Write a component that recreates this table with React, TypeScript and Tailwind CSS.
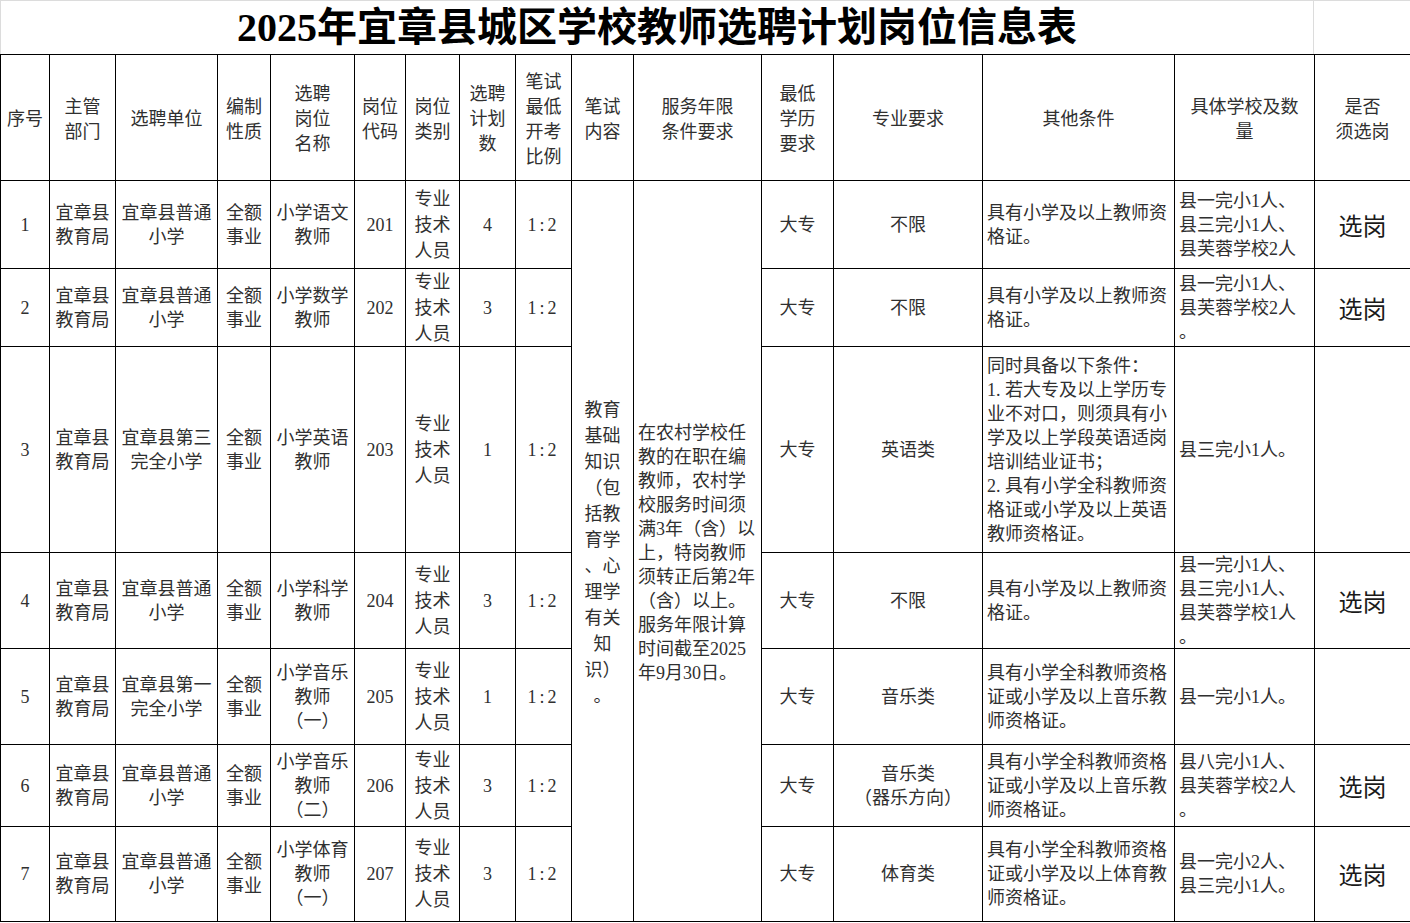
import React from "react";

type CellProps = { lines: string[]; left?: boolean; cls?: string; span?: boolean };

function Cell({ lines, left, cls = "", span }: CellProps) {
  return (
    <div
      className={`bg-white flex items-center ${
        left ? "justify-start text-left pl-[4px]" : "justify-center text-center"
      } ${span ? "row-span-7" : ""} ${cls}`}
    >
      <div className="whitespace-nowrap">
        {lines.map((l, i) => (
          <div key={i}>{l}</div>
        ))}
      </div>
    </div>
  );
}

type Row = {
  no: string;
  unit: string[];
  post: string[];
  code: string;
  count: string;
  major: string[];
  other: string[];
  schools: string[];
  pick: string;
};

const rows: Row[] = [
  {
    no: "1",
    unit: ["宜章县普通", "小学"],
    post: ["小学语文", "教师"],
    code: "201",
    count: "4",
    major: ["不限"],
    other: ["具有小学及以上教师资", "格证。"],
    schools: ["县一完小1人、", "县三完小1人、", "县芙蓉学校2人"],
    pick: "选岗",
  },
  {
    no: "2",
    unit: ["宜章县普通", "小学"],
    post: ["小学数学", "教师"],
    code: "202",
    count: "3",
    major: ["不限"],
    other: ["具有小学及以上教师资", "格证。"],
    schools: ["县一完小1人、", "县芙蓉学校2人", "。"],
    pick: "选岗",
  },
  {
    no: "3",
    unit: ["宜章县第三", "完全小学"],
    post: ["小学英语", "教师"],
    code: "203",
    count: "1",
    major: ["英语类"],
    other: [
      "同时具备以下条件：",
      "1. 若大专及以上学历专",
      "业不对口，则须具有小",
      "学及以上学段英语适岗",
      "培训结业证书；",
      "2. 具有小学全科教师资",
      "格证或小学及以上英语",
      "教师资格证。",
    ],
    schools: ["县三完小1人。"],
    pick: "",
  },
  {
    no: "4",
    unit: ["宜章县普通", "小学"],
    post: ["小学科学", "教师"],
    code: "204",
    count: "3",
    major: ["不限"],
    other: ["具有小学及以上教师资", "格证。"],
    schools: ["县一完小1人、", "县三完小1人、", "县芙蓉学校1人", "。"],
    pick: "选岗",
  },
  {
    no: "5",
    unit: ["宜章县第一", "完全小学"],
    post: ["小学音乐", "教师", "（一）"],
    code: "205",
    count: "1",
    major: ["音乐类"],
    other: ["具有小学全科教师资格", "证或小学及以上音乐教", "师资格证。"],
    schools: ["县一完小1人。"],
    pick: "",
  },
  {
    no: "6",
    unit: ["宜章县普通", "小学"],
    post: ["小学音乐", "教师", "（二）"],
    code: "206",
    count: "3",
    major: ["音乐类", "（器乐方向）"],
    other: ["具有小学全科教师资格", "证或小学及以上音乐教", "师资格证。"],
    schools: ["县八完小1人、", "县芙蓉学校2人", "。"],
    pick: "选岗",
  },
  {
    no: "7",
    unit: ["宜章县普通", "小学"],
    post: ["小学体育", "教师", "（一）"],
    code: "207",
    count: "3",
    major: ["体育类"],
    other: ["具有小学全科教师资格", "证或小学及以上体育教", "师资格证。"],
    schools: ["县一完小2人、", "县三完小1人。"],
    pick: "选岗",
  },
];

const headers: string[][] = [
  ["序号"],
  ["主管", "部门"],
  ["选聘单位"],
  ["编制", "性质"],
  ["选聘", "岗位", "名称"],
  ["岗位", "代码"],
  ["岗位", "类别"],
  ["选聘", "计划", "数"],
  ["笔试", "最低", "开考", "比例"],
  ["笔试", "内容"],
  ["服务年限", "条件要求"],
  ["最低", "学历", "要求"],
  ["专业要求"],
  ["其他条件"],
  ["具体学校及数", "量"],
  ["是否", "须选岗"],
];

const examContent = ["教育", "基础", "知识", "（包", "括教", "育学", "、心", "理学", "有关", "知", "识）", "。"];

const service = [
  "在农村学校任",
  "教的在职在编",
  "教师，农村学",
  "校服务时间须",
  "满3年（含）以",
  "上，特岗教师",
  "须转正后第2年",
  "（含）以上。",
  "服务年限计算",
  "时间截至2025",
  "年9月30日。",
];

export default function App() {
  return (
    <div className="w-[1410px] h-[923px] overflow-hidden bg-white text-[18px] leading-[24px] text-[#303030] font-['Liberation_Serif','Noto_Sans_CJK_SC',serif]">
      <div className="flex h-[54px] border-t border-l border-[#dcdcdc]">
        <div className="w-[1313px] h-full border-r border-[#dcdcdc] flex items-center justify-center">
          <span className="text-[40px] leading-[44px] font-bold text-black">
            2025年宜章县城区学校教师选聘计划岗位信息表
          </span>
        </div>
        <div className="flex-1" />
      </div>
      <div className="grid w-[1410px] bg-black gap-px pt-px pb-px pl-px grid-cols-[48px_65px_101px_52px_83px_50px_53px_55px_55px_61px_127px_71px_148px_191px_139px_95px] grid-rows-[125px_87px_77px_205px_95px_95px_81px_94px]">
        {headers.map((h, i) => (
          <Cell key={`h${i}`} lines={h} cls="leading-[25px] pt-[4px]" />
        ))}
        {rows.map((r, ri) => (
          <React.Fragment key={r.no}>
            <Cell lines={[r.no]} />
            <Cell lines={["宜章县", "教育局"]} />
            <Cell lines={r.unit} />
            <Cell lines={["全额", "事业"]} />
            <Cell lines={r.post} />
            <Cell lines={[r.code]} />
            <Cell lines={["专业", "技术", "人员"]} cls="leading-[26px]" />
            <Cell lines={[r.count]} />
            <Cell lines={["1:2"]} cls="tracking-[3px]" />
            {ri === 0 && (
              <>
                <Cell lines={examContent} span cls="leading-[26px] pt-[3px]" />
                <Cell lines={service} span left cls="pt-[4px]" />
              </>
            )}
            <Cell lines={["大专"]} />
            <Cell lines={r.major} />
            <Cell lines={r.other} left />
            <Cell lines={r.schools} left />
            <Cell
              lines={[r.pick]}
              cls="text-[24px] text-[#1a1a1a] font-['Noto_Sans_CJK_SC',sans-serif]"
            />
          </React.Fragment>
        ))}
      </div>
    </div>
  );
}
